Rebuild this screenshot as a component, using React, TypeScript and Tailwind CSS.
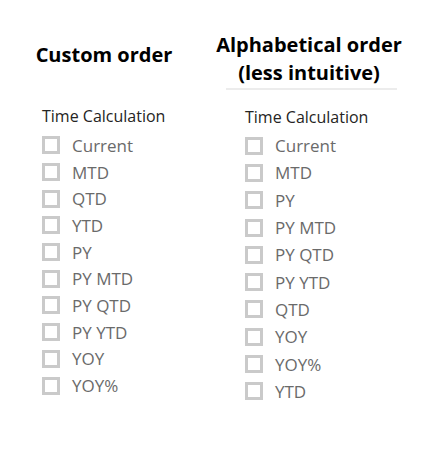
import React from "react";

const left = ["Current", "MTD", "QTD", "YTD", "PY", "PY MTD", "PY QTD", "PY YTD", "YOY", "YOY%"];
const right = ["Current", "MTD", "PY", "PY MTD", "PY QTD", "PY YTD", "QTD", "YOY", "YOY%", "YTD"];

function Box() {
  return <span className="w-[18px] h-[18px] border-[3px] border-[#cacaca] bg-white shrink-0" />;
}

export default function App() {
  return (
    <div
      className="flex w-[443px] h-[449px] bg-white overflow-hidden"
      style={{ fontFamily: '"Open Sans", "Noto Sans", sans-serif' }}
    >
      <div className="w-[208px] pt-[41px] flex flex-col">
        <div className="h-[28px] leading-[28px] text-center text-[20px] font-bold text-black">Custom order</div>
        <div className="mt-[36px] pl-[42px] h-[22px] leading-[22px] text-[16px] text-[#252423]">Time Calculation</div>
        <div className="mt-[5px] pl-[42px] flex flex-col">
          {left.map((t) => (
            <div key={t} className="h-[26.7px] flex items-center gap-[12px]">
              <Box />
              <span className="text-[17px] leading-none text-[#6a6a6a]">{t}</span>
            </div>
          ))}
        </div>
      </div>
      <div className="w-[202px] pt-[31px] flex flex-col">
        <div className="text-center text-[20px] font-bold text-black leading-[28px]">
          <div>Alphabetical order</div>
          <div>(less intuitive)</div>
        </div>
        <div className="mt-[1px] ml-[18px] mr-[13px] h-[2px] bg-[#ececec]" />
        <div className="mt-[16px] pl-[37px] h-[22px] leading-[22px] text-[16px] text-[#252423]">Time Calculation</div>
        <div className="mt-[4px] pl-[37px] flex flex-col">
          {right.map((t) => (
            <div key={t} className="h-[27.3px] flex items-center gap-[12px]">
              <Box />
              <span className="text-[17px] leading-none text-[#6a6a6a]">{t}</span>
            </div>
          ))}
        </div>
      </div>
    </div>
  );
}
